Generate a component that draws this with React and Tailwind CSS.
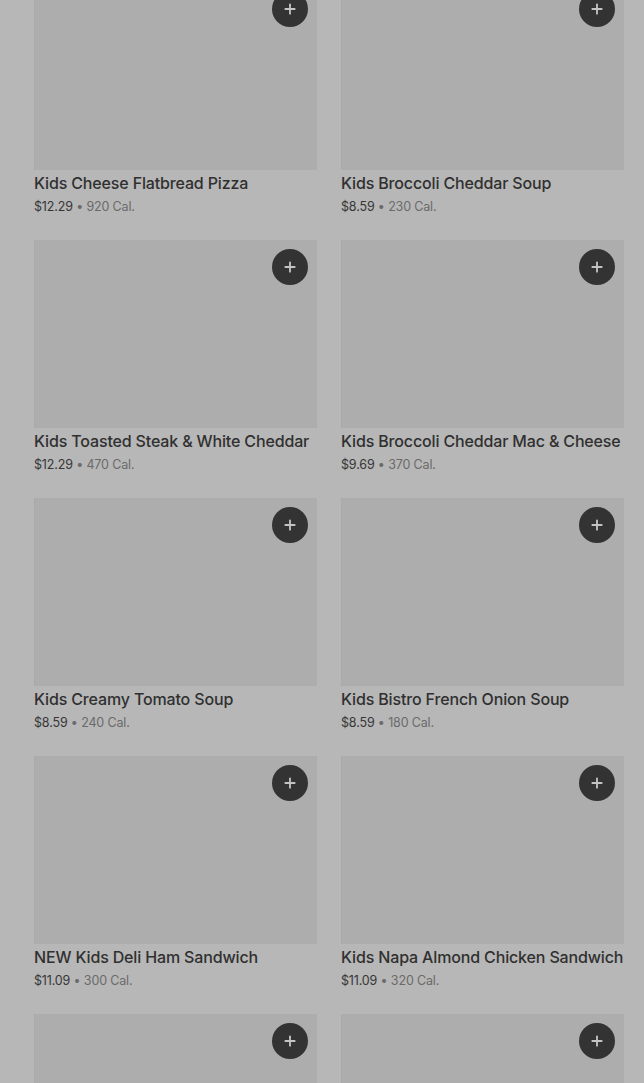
import { Plus } from 'lucide-react';

const ITEMS = [
  { name: 'Kids Cheese Flatbread Pizza', price: '$12.29', cal: '920 Cal.' },
  { name: 'Kids Broccoli Cheddar Soup', price: '$8.59', cal: '230 Cal.' },
  { name: 'Kids Toasted Steak & White Cheddar', price: '$12.29', cal: '470 Cal.' },
  { name: 'Kids Broccoli Cheddar Mac & Cheese', price: '$9.69', cal: '370 Cal.' },
  { name: 'Kids Creamy Tomato Soup', price: '$8.59', cal: '240 Cal.' },
  { name: 'Kids Bistro French Onion Soup', price: '$8.59', cal: '180 Cal.' },
  { name: 'NEW Kids Deli Ham Sandwich', price: '$11.09', cal: '300 Cal.' },
  { name: 'Kids Napa Almond Chicken Sandwich', price: '$11.09', cal: '320 Cal.' },
  { name: '', price: '', cal: '' },
  { name: '', price: '', cal: '' },
];

function Card({ item }) {
  return (
    <div className="flex flex-col">
      <div className="relative h-[188px] bg-[#adadad] border-l border-[#a9a9a9]">
        <button className="absolute top-[9px] right-[9px] w-9 h-9 rounded-full bg-[#333333] flex items-center justify-center text-[#c4c4c4]">
          <Plus size={16} strokeWidth={2.75} />
        </button>
      </div>
      {item.name && (
        <>
          <p className="mt-[3px] text-[16px] leading-[20px] font-medium tracking-[-0.15px] text-[#303030] whitespace-nowrap">{item.name}</p>
          <p className="mt-[6px] text-[12.5px] leading-[16px] tracking-[-0.15px] whitespace-nowrap">
            <span className="text-[#363636]">{item.price}</span>
            <span className="text-[#6a6a6a]"> • {item.cal}</span>
          </p>
        </>
      )}
    </div>
  );
}

export default function App() {
  return (
    <div className="h-[1083px] overflow-hidden bg-[#b7b7b7]" style={{ fontFamily: 'Inter, "Noto Sans", sans-serif' }}>
      <div className="mt-[-18px] pl-[34px] pr-[20px] grid grid-cols-2 gap-x-[24px] gap-y-[25px]">
        {ITEMS.map((item, i) => (
          <Card key={i} item={item} />
        ))}
      </div>
    </div>
  );
}
